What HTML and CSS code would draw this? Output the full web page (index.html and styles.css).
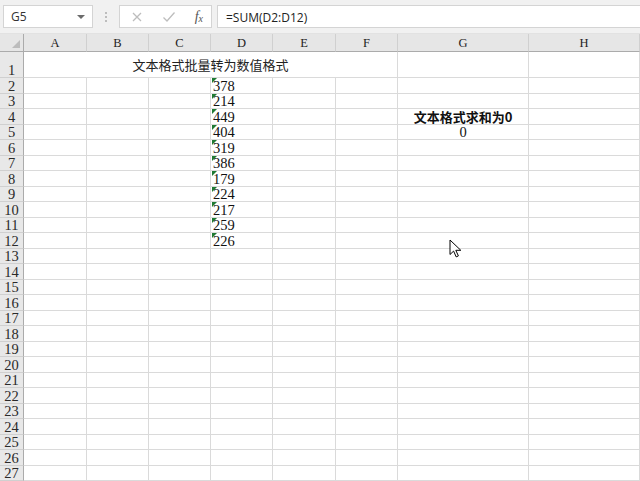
FILE: index.html
```html
<!DOCTYPE html>
<html lang="zh-CN">
<head>
    <meta charset="utf-8">
    <title>文本格式批量转为数值格式</title>
    <link rel="stylesheet" href="styles.css">
</head>
<body>
    <div class="toolbar">
        <div class="namebox">
            <span>G5</span>
            <svg class="caret" width="8" height="5" viewBox="0 0 8 5"><path d="M0 0h8L4 4z" fill="#6b6b6b"/></svg>
        </div>
        <div class="grip"><i></i><i></i><i></i></div>
        <div class="fx-buttons">
            <svg class="btn" width="12" height="12" viewBox="0 0 12 12"><path d="M2 2l8 8M10 2l-8 8" stroke="#bdbdbd" stroke-width="1.3" fill="none"/></svg>
            <svg class="btn" width="14" height="12" viewBox="0 0 14 12"><path d="M1.5 6.5l3.5 3.5 7.5-8.5" stroke="#bdbdbd" stroke-width="1.3" fill="none"/></svg>
            <span class="fx">f<sub>x</sub></span>
        </div>
        <div class="formula">=SUM(D2:D12)</div>
    </div>

    <div class="sheet" id="sheet"></div>

    <svg class="cursor" width="13" height="19" viewBox="0 0 13 19">
        <path d="M1 1v14.5l3.6-3.4 2.6 5.8 2.2-1-2.6-5.6h5z" fill="#fff" stroke="#000" stroke-width="1" stroke-linejoin="round"/>
    </svg>

<script>
    let cols = ['', 'A', 'B', 'C', 'D', 'E', 'F', 'G', 'H'];
    let values = [378, 214, 449, 404, 319, 386, 179, 224, 217, 259, 226];
    let sheet = document.querySelector('#sheet');

    function cell(cls, text) {
        let div = document.createElement('div');
        div.className = cls;
        if (text !== undefined) div.textContent = text;
        sheet.appendChild(div);
        return div;
    }

    // column headers
    cell('corner').innerHTML = '<span class="select-all"></span>';
    for (let c = 1; c < cols.length; c++) {
        cell('colhead', cols[c]);
    }

    for (let r = 1; r <= 27; r++) {
        cell('rowhead', r);
        if (r === 1) {
            cell('cell title merged', '文本格式批量转为数值格式');
            cell('cell');
            cell('cell');
            continue;
        }
        for (let c = 1; c < cols.length; c++) {
            let col = cols[c];
            if (col === 'D' && r <= 12) {
                cell('cell txt', values[r - 2]);
            } else if (col === 'G' && r === 4) {
                cell('cell center bold', '文本格式求和为0');
            } else if (col === 'G' && r === 5) {
                cell('cell center', '0');
            } else {
                cell('cell');
            }
        }
    }
</script>
</body>
</html>
```

FILE: styles.css
```css
*{
    box-sizing: border-box;
}

body{
    margin: 0;
    width: 640px;
    height: 481px;
    overflow: hidden;
    background: #ffffff;
    font-family: "Liberation Serif", "Noto Sans CJK SC", serif;
    position: relative;
}

/* formula bar */
.toolbar{
    display: flex;
    align-items: flex-start;
    height: 34px;
    padding: 5px 0 0 3px;
    background-color: #f1f1f1;
    border-bottom: 1px solid #e2e2e2;
}

.namebox{
    display: flex;
    align-items: center;
    justify-content: space-between;
    width: 90px;
    height: 23px;
    padding: 0 7px 0 7px;
    background: #ffffff;
    border: 1px solid #d4d4d4;
    font-family: "Open Sans", "Liberation Sans", sans-serif;
    font-size: 12px;
    color: #333333;
}

.caret{
    margin-top: 1px;
}

.grip{
    display: flex;
    flex-direction: column;
    align-items: center;
    gap: 2px;
    width: 26px;
    padding-top: 7px;
}

.grip i{
    display: block;
    width: 2px;
    height: 2px;
    background: #bdbdbd;
}

.fx-buttons{
    display: flex;
    align-items: center;
    justify-content: space-between;
    width: 93px;
    height: 23px;
    padding: 0 8px 0 11px;
    background: #ffffff;
    border: 1px solid #d4d4d4;
}

.fx{
    font-family: "Liberation Serif", serif;
    font-style: italic;
    font-size: 14px;
    color: #555555;
}

.fx sub{
    font-size: 10px;
    vertical-align: -1px;
}

.formula{
    flex: 1;
    height: 23px;
    margin-left: 5px;
    padding: 3px 0 0 8px;
    background: #ffffff;
    border: 1px solid #d4d4d4;
    border-right: none;
    font-family: "Open Sans", "Liberation Sans", sans-serif;
    font-size: 12px;
    color: #222222;
}

/* grid */
.sheet{
    display: grid;
    grid-template-columns: 24px 63px 62px 62px 62px 63px 62px 131px 1fr;
    grid-template-rows: 18px 26px repeat(26, 15.5px);
}

.corner{
    position: relative;
    background: #e6e6e6;
    border-right: 1px solid #ababab;
    border-bottom: 1px solid #ababab;
}

.select-all{
    position: absolute;
    right: 3px;
    bottom: 3px;
    width: 0;
    height: 0;
    border-left: 8px solid transparent;
    border-bottom: 8px solid #bcbcbc;
}

.colhead{
    display: flex;
    align-items: center;
    justify-content: center;
    background: #e6e6e6;
    border-right: 1px solid #d0d0d0;
    border-bottom: 1px solid #ababab;
    font-size: 12.5px;
    color: #222222;
    padding-top: 2px;
}

.rowhead{
    display: flex;
    align-items: flex-end;
    justify-content: center;
    background: #e8e8e8;
    border-right: 1px solid #ababab;
    border-bottom: 1px solid #d0d0d0;
    font-size: 14.5px;
    line-height: 14px;
    color: #2a2a2a;
}

.cell{
    display: flex;
    align-items: flex-end;
    border-right: 1px solid #dadada;
    border-bottom: 1px solid #dadada;
    font-size: 14.5px;
    line-height: 14px;
    color: #111111;
    padding: 0 2px 0 2px;
    white-space: nowrap;
}

.merged{
    grid-column: span 6;
}

.title{
    justify-content: center;
    padding-bottom: 5px;
    font-family: "Noto Sans CJK SC", sans-serif;
    font-size: 13px;
    line-height: 15px;
    color: #222222;
}

.txt{
    position: relative;
}

.txt::before{
    content: "";
    position: absolute;
    left: 1px;
    top: 0;
    width: 0;
    height: 0;
    border-top: 5px solid #1f7a34;
    border-right: 5px solid transparent;
}

.center{
    justify-content: center;
}

.bold{
    font-family: "Noto Sans CJK SC", sans-serif;
    font-weight: bold;
    font-size: 13px;
    line-height: 15px;
}

.cursor{
    position: absolute;
    left: 449px;
    top: 239px;
}
```
